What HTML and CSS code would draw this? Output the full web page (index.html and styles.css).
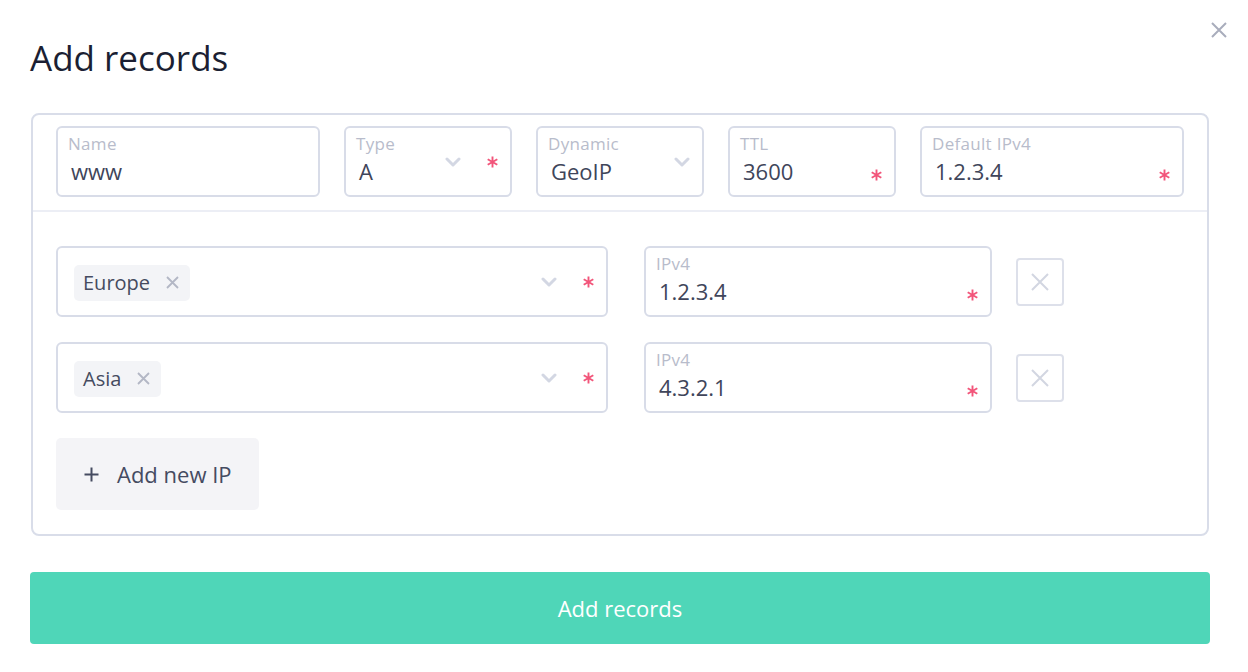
FILE: index.html
```html
<!DOCTYPE html>
<html lang="en">
<head>
<meta charset="utf-8">
<title>Add records</title>
<link rel="stylesheet" href="styles.css">
</head>
<body>
<div class="modal">
  <button class="close" aria-label="Close">
    <svg width="16" height="16" viewBox="0 0 16 16"><path d="M1 1l14 14M15 1L1 15" stroke="#a9adbc" stroke-width="2" fill="none"/></svg>
  </button>
  <h1 class="title">Add records</h1>

  <div class="card">
    <div class="card-top">
      <div class="field">
        <div class="field-body"><div class="label">Name</div><div class="value">www</div></div>
      </div>
      <div class="field">
        <div class="field-body"><div class="label">Type</div><div class="value">A</div></div>
        <div class="icons icons-center">
          <svg class="chev" width="16" height="10" viewBox="0 0 16 10"><path d="M2 2l6 6 6-6" stroke="#d3d7e3" stroke-width="3" fill="none" stroke-linecap="round" stroke-linejoin="round"/></svg>
          <svg class="req" width="11" height="12" viewBox="0 0 11 12"><path d="M5.5 0.5v11M0.7 3.25l9.6 5.5M0.7 8.75l9.6-5.5" stroke="#f2557a" stroke-width="1.9"/></svg>
        </div>
      </div>
      <div class="field">
        <div class="field-body"><div class="label">Dynamic</div><div class="value">GeoIP</div></div>
        <div class="icons icons-center">
          <svg class="chev" width="16" height="10" viewBox="0 0 16 10"><path d="M2 2l6 6 6-6" stroke="#d3d7e3" stroke-width="3" fill="none" stroke-linecap="round" stroke-linejoin="round"/></svg>
        </div>
      </div>
      <div class="field">
        <div class="field-body"><div class="label">TTL</div><div class="value">3600</div></div>
        <div class="icons icons-low">
          <svg class="req" width="11" height="12" viewBox="0 0 11 12"><path d="M5.5 0.5v11M0.7 3.25l9.6 5.5M0.7 8.75l9.6-5.5" stroke="#f2557a" stroke-width="1.9"/></svg>
        </div>
      </div>
      <div class="field">
        <div class="field-body"><div class="label">Default IPv4</div><div class="value">1.2.3.4</div></div>
        <div class="icons icons-low">
          <svg class="req" width="11" height="12" viewBox="0 0 11 12"><path d="M5.5 0.5v11M0.7 3.25l9.6 5.5M0.7 8.75l9.6-5.5" stroke="#f2557a" stroke-width="1.9"/></svg>
        </div>
      </div>
    </div>

    <div class="card-rows">
      <div class="row">
        <div class="field region">
          <div class="chips"><span class="chip">Europe<svg width="13" height="13" viewBox="0 0 13 13"><path d="M1 1l11 11M12 1L1 12" stroke="#b3b7c5" stroke-width="1.8" fill="none"/></svg></span></div>
          <div class="icons icons-center">
            <svg class="chev" width="16" height="10" viewBox="0 0 16 10"><path d="M2 2l6 6 6-6" stroke="#d3d7e3" stroke-width="3" fill="none" stroke-linecap="round" stroke-linejoin="round"/></svg>
            <svg class="req" width="11" height="12" viewBox="0 0 11 12"><path d="M5.5 0.5v11M0.7 3.25l9.6 5.5M0.7 8.75l9.6-5.5" stroke="#f2557a" stroke-width="1.9"/></svg>
          </div>
        </div>
        <div class="field ipv4">
          <div class="field-body"><div class="label">IPv4</div><div class="value">1.2.3.4</div></div>
          <div class="icons icons-low">
            <svg class="req" width="11" height="12" viewBox="0 0 11 12"><path d="M5.5 0.5v11M0.7 3.25l9.6 5.5M0.7 8.75l9.6-5.5" stroke="#f2557a" stroke-width="1.9"/></svg>
          </div>
        </div>
        <button class="del" aria-label="Remove">
          <svg width="18" height="18" viewBox="0 0 18 18"><path d="M1 1l16 16M17 1L1 17" stroke="#d2d6e1" stroke-width="2" fill="none"/></svg>
        </button>
      </div>

      <div class="row">
        <div class="field region">
          <div class="chips"><span class="chip">Asia<svg width="13" height="13" viewBox="0 0 13 13"><path d="M1 1l11 11M12 1L1 12" stroke="#b3b7c5" stroke-width="1.8" fill="none"/></svg></span></div>
          <div class="icons icons-center">
            <svg class="chev" width="16" height="10" viewBox="0 0 16 10"><path d="M2 2l6 6 6-6" stroke="#d3d7e3" stroke-width="3" fill="none" stroke-linecap="round" stroke-linejoin="round"/></svg>
            <svg class="req" width="11" height="12" viewBox="0 0 11 12"><path d="M5.5 0.5v11M0.7 3.25l9.6 5.5M0.7 8.75l9.6-5.5" stroke="#f2557a" stroke-width="1.9"/></svg>
          </div>
        </div>
        <div class="field ipv4">
          <div class="field-body"><div class="label">IPv4</div><div class="value">4.3.2.1</div></div>
          <div class="icons icons-low">
            <svg class="req" width="11" height="12" viewBox="0 0 11 12"><path d="M5.5 0.5v11M0.7 3.25l9.6 5.5M0.7 8.75l9.6-5.5" stroke="#f2557a" stroke-width="1.9"/></svg>
          </div>
        </div>
        <button class="del" aria-label="Remove">
          <svg width="18" height="18" viewBox="0 0 18 18"><path d="M1 1l16 16M17 1L1 17" stroke="#d2d6e1" stroke-width="2" fill="none"/></svg>
        </button>
      </div>

      <button class="add-ip">
        <svg width="15" height="15" viewBox="0 0 15 15"><path d="M7.5 0.5v14M0.5 7.5h14" stroke="#454b61" stroke-width="2" fill="none"/></svg>
        <span>Add new IP</span>
      </button>
    </div>
  </div>

  <button class="submit">Add records</button>
</div>
</body>
</html>
```

FILE: styles.css
```css
* { box-sizing: border-box; }

html, body {
  margin: 0;
  padding: 0;
  background: #ffffff;
}

body {
  font-family: "Open Sans", "Noto Sans", "Liberation Sans", sans-serif;
  color: #40455a;
}

button {
  font-family: inherit;
  border: none;
  background: none;
  padding: 0;
  margin: 0;
  cursor: pointer;
}

.modal {
  position: relative;
  width: 1248px;
  padding: 34px 38px 0 30px;
}

.close {
  position: absolute;
  top: 22px;
  left: 1211px;
  width: 16px;
  height: 16px;
  display: flex;
}

.title {
  margin: 0 0 31px 0;
  font-size: 35px;
  line-height: 48px;
  font-weight: 400;
  color: #1b1f33;
}

.card {
  margin: 0 1px;
  border: 2px solid #d9dde9;
  border-radius: 8px;
}

.card-top {
  display: grid;
  grid-template-columns: 264px 168px 168px 168px 264px;
  column-gap: 24px;
  padding: 11px 23px 13px 23px;
  border-bottom: 2px solid #eceef5;
}

.field {
  display: flex;
  height: 71px;
  border: 2px solid #d8dce8;
  border-radius: 6px;
  padding: 0 12px 0 10px;
  background: #fff;
}

.field-body {
  flex: 1;
  min-width: 0;
  padding-top: 6px;
}

.label {
  font-size: 17px;
  line-height: 20px;
  letter-spacing: 0.3px;
  color: #b8bccb;
  white-space: nowrap;
}

.value {
  margin-top: 3px;
  padding-left: 3px;
  font-size: 22px;
  line-height: 28px;
  color: #40455a;
  white-space: nowrap;
}

.icons {
  display: flex;
  align-items: center;
  gap: 26px;
}

.icons-center {
  align-self: center;
}

.icons-low {
  align-self: flex-start;
  height: 28px;
  margin-top: 33px;
}

.chev, .req { display: block; }

.card-rows {
  display: flex;
  flex-direction: column;
  align-items: flex-start;
  gap: 25px;
  padding: 34px 23px 24px 23px;
}

.row {
  display: flex;
  align-items: center;
}

.region {
  width: 552px;
  align-items: center;
  padding-left: 16px;
}

.chips {
  flex: 1;
  display: flex;
  padding-top: 2px;
}

.chip {
  display: inline-flex;
  align-items: center;
  gap: 16px;
  height: 36px;
  padding: 0 11px 0 9px;
  background: #f3f4f7;
  border-radius: 5px;
  font-size: 20px;
  color: #454b60;
}

.ipv4 {
  width: 348px;
  margin-left: 36px;
}

.del {
  width: 48px;
  height: 48px;
  margin-left: 24px;
  border: 2px solid #dde0ea;
  border-radius: 4px;
  display: flex;
  align-items: center;
  justify-content: center;
}

.add-ip {
  display: flex;
  align-items: center;
  gap: 18px;
  height: 72px;
  padding: 0 27px 0 28px;
  background: #f4f4f7;
  border-radius: 5px;
  font-size: 22px;
  color: #454b61;
}

.submit {
  display: block;
  width: 1180px;
  height: 72px;
  margin-top: 36px;
  background: #4fd6b8;
  border-radius: 4px;
  color: #ffffff;
  font-size: 22px;
  text-align: center;
}
```
